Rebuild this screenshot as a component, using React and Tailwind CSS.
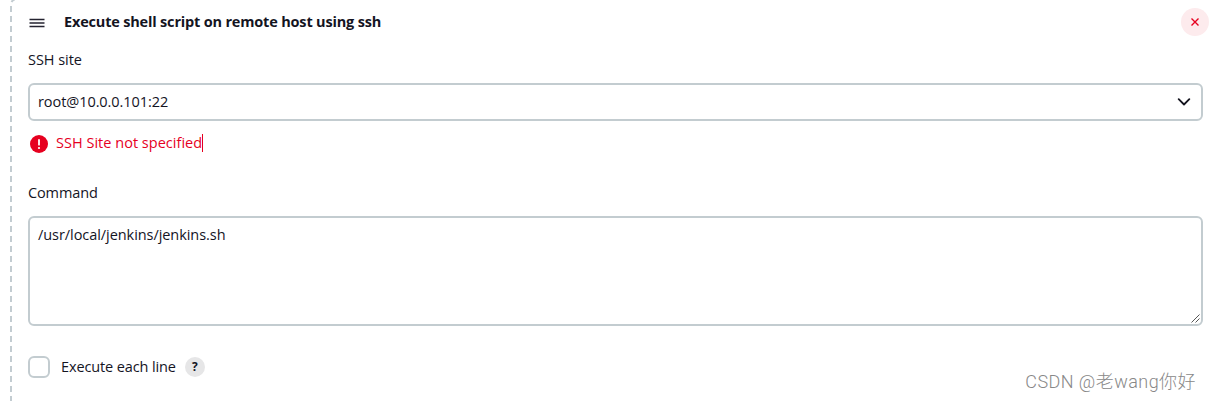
import React from "react";

export default function App() {
  return (
    <main className="flex h-[401px] w-[1211px] overflow-hidden bg-white font-['Open_Sans','Noto_Sans',sans-serif] text-[14.5px] leading-5 text-[#14141f]">
      <div className="w-7 shrink-0 pl-[10px]">
        <svg width="6" height="401" fill="none" stroke="#c3ccd1" strokeWidth="2">
          <path d="M1 6V401" strokeDasharray="6 4" />
          <path d="M1.5 2 Q2.5 0.3 4.5 -0.5" />
        </svg>
      </div>
      <section className="flex w-[1183px] flex-col">
        <header className="flex h-11 items-center pr-[2px]">
          <svg width="18" height="18" viewBox="0 0 18 18" className="mt-[2px]" stroke="#242330" strokeWidth="1.6" strokeLinecap="butt">
            <path d="M1.5 5.5H16.5M1.5 9H16.5M1.5 12.5H16.5" />
          </svg>
          <h1 className="ml-[18px] whitespace-nowrap font-bold tracking-[-0.18px]">Execute shell script on remote host using ssh</h1>
          <button aria-label="Delete" className="ml-auto flex size-7 items-center justify-center rounded-full bg-[#fdebed]">
            <svg width="8" height="8" viewBox="0 0 8 8" stroke="#e6001f" strokeWidth="1.4"><path d="M.5 .5L7.5 7.5M7.5 .5L.5 7.5" /></svg>
          </button>
        </header>
        <label className="mt-[6px] tracking-[-0.05px]">SSH site</label>
        <div className="mt-[13px] flex h-[38px] w-[1175px] items-center rounded-md border-2 border-[#c3ccd0] pr-[10px] pl-2">
          <span className="tracking-[-0.07px]">root@10.0.0.101:22</span>
          <svg className="-mt-px ml-auto" width="14" height="8" viewBox="0 0 14 8" fill="none" stroke="#14141f" strokeWidth="1.8" strokeLinecap="round" strokeLinejoin="round"><path d="M1.7 1.2L7 6.5L12.3 1.2" /></svg>
        </div>
        <div className="mt-3 flex h-5 items-center text-[#e6001f]">
          <svg className="mt-[2px] ml-[2px]" width="18" height="18" viewBox="0 0 18 18">
            <circle cx="9" cy="9" r="9" fill="#e6001f" />
            <path d="M9 5V9.7" stroke="#fff" strokeWidth="1.8" strokeLinecap="round" />
            <circle cx="9" cy="13" r="1.1" fill="#fff" />
          </svg>
          <span className="ml-2 tracking-[0.02px]">SSH Site not specified</span>
          <span className="h-[18px] w-px bg-[#e6001f]" />
        </div>
        <label className="mt-[30px] tracking-[-0.12px]">Command</label>
        <div className="mt-[13px] flex h-[110px] w-[1175px] items-end justify-between rounded-md border-2 border-[#c3ccd0] pl-2">
          <span className="self-start pt-[7px] tracking-[-0.06px]">/usr/local/jenkins/jenkins.sh</span>
          <svg width="12" height="12" viewBox="0 0 12 12" stroke="#444" strokeWidth=".9"><path d="M2.5 10.5L10.5 2.5M6.5 10.5L10.5 6.5" /></svg>
        </div>
        <div className="mt-[30px] flex h-[22px] items-center">
          <span role="checkbox" aria-checked="false" className="size-[22px] rounded-md border-2 border-[#c3ccd0]" />
          <span className="ml-[11px] tracking-[-0.12px]">Execute each line</span>
          <span className="ml-[9px] flex size-5 items-center justify-center rounded-full bg-[#e6e6e7] text-[12px] font-bold">?</span>
        </div>
        <footer className="-mt-[6px] self-end whitespace-nowrap pr-[15px] font-[Roboto,'Noto_Sans_CJK_SC',sans-serif] text-[18px] font-light tracking-[0.45px] text-[#888]">CSDN @老wang你好</footer>
      </section>
    </main>
  );
}
